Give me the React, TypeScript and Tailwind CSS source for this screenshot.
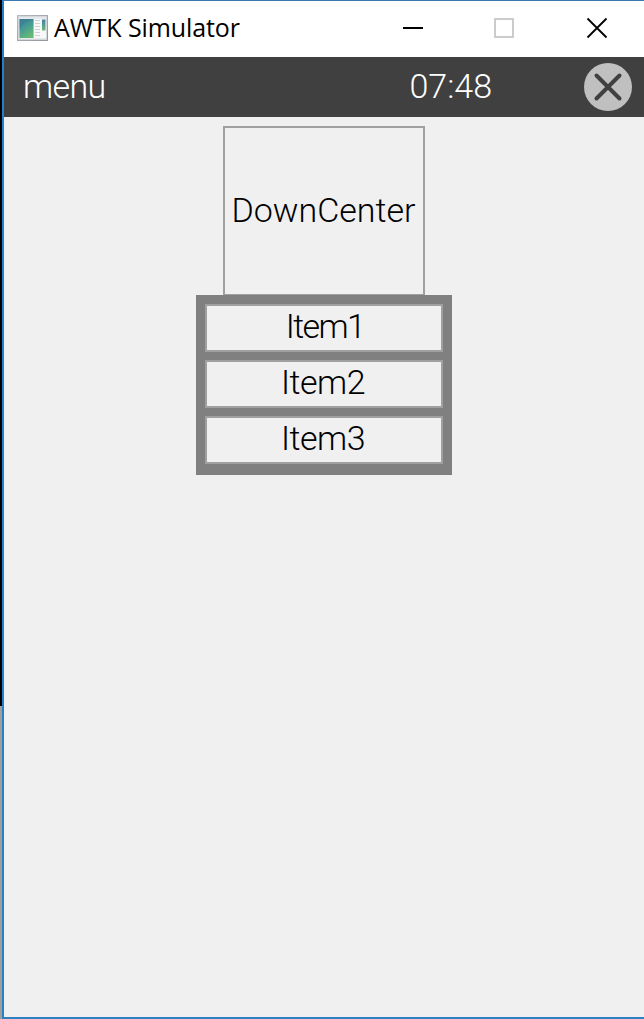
function AppIcon() {
  return (
    <svg width="32" height="26" viewBox="0 0 32 26" className="mb-0.5 shrink-0">
      <defs>
        <linearGradient id="pane" x1="0" y1="0" x2="0.5" y2="1">
          <stop offset="0" stopColor="#3f7f9c" />
          <stop offset="0.5" stopColor="#459a94" />
          <stop offset="1" stopColor="#64b878" />
        </linearGradient>
        <linearGradient id="strip" x1="0" y1="0" x2="0" y2="1">
          <stop offset="0" stopColor="#4480a8" />
          <stop offset="1" stopColor="#6cb978" />
        </linearGradient>
        <linearGradient id="frame" x1="0" y1="0" x2="1" y2="1">
          <stop offset="0" stopColor="#b4bac0" />
          <stop offset="1" stopColor="#92979c" />
        </linearGradient>
      </defs>
      <rect x="0.5" y="0.5" width="30" height="25" fill="#e6e9ec" stroke="url(#frame)" />
      <rect x="1.5" y="1.5" width="28" height="23" fill="none" stroke="#d3d7da" />
      <rect x="17" y="4" width="12" height="19" fill="#f8f8f8" />
      <rect x="2.5" y="4" width="14" height="19" fill="url(#pane)" />
      <path d="M2.5 14Q7 6 16.5 5V4h-14z" fill="#38758f" opacity="0.4" />
      <path d="M18 5.5h5M18 8.5h5M18 11.5h5M18 14.5h5M18 17.5h5M18 20.5h5" stroke="#cfd2d5" />
      <rect x="25" y="4.5" width="3.5" height="11" fill="url(#strip)" />
    </svg>
  );
}

function TitleBar() {
  return (
    <header className="flex h-14 shrink-0 items-center bg-white pl-[13px] pr-9 text-black">
      <AppIcon />
      <h1 className="mb-1 ml-[5px] flex-1 whitespace-nowrap font-['Open_Sans',sans-serif] text-[25px] font-normal leading-[34px] tracking-[-0.1px]">
        AWTK Simulator
      </h1>
      <div className="mb-0.5 flex items-center">
        <button aria-label="Minimize" className="mr-[71px] h-0.5 w-5 bg-black" />
        <button aria-label="Maximize" className="mr-[72px] size-5 border-2 border-[#cccccc]" />
        <button aria-label="Close" className="size-[22px]">
          <svg width="22" height="22" viewBox="0 0 22 22" fill="none" stroke="#000" strokeWidth="1.8">
            <path d="M1.5 1.5 20.5 20.5M20.5 1.5 1.5 20.5" />
          </svg>
        </button>
      </div>
    </header>
  );
}

function MenuBar() {
  return (
    <nav className="flex h-[60px] shrink-0 items-center bg-[#404040] pl-[19px] pr-3 text-white">
      <span className="mb-0.5 flex-1 tracking-[-0.6px]">menu</span>
      <time className="mb-0.5 mr-[92px]">07:48</time>
      <button aria-label="Close window" className="size-12">
        <svg width="48" height="48" viewBox="0 0 48 48">
          <circle cx="24" cy="24" r="24" fill="#c0c0c0" />
          <path d="M12.5 12.5 35.5 35.5M35.5 12.5 12.5 35.5" stroke="#404040" strokeWidth="4" strokeLinecap="round" />
        </svg>
      </button>
    </nav>
  );
}

export default function App() {
  return (
    <div className="flex h-[1019px] w-[644px] overflow-hidden font-['Roboto',sans-serif] text-[34px] font-light leading-[40px]">
      <div className="flex w-0.5 shrink-0 flex-col bg-[#a09f9b]">
        <div className="h-[706px] bg-black" />
      </div>
      <div className="flex flex-1 flex-col border-b-2 border-l-2 border-t border-b-[#2f80c2] border-l-[#2680c8] border-t-[#3a78b0] bg-[#f0f0f0]">
        <TitleBar />
        <MenuBar />
        <main className="flex flex-col items-center pt-[9px] text-black">
          <button className="h-[170px] w-[202px] whitespace-nowrap border-2 border-[#a0a0a0] pb-0.5 pr-px font-light">DownCenter</button>
          <ul className="-mt-px flex h-[180px] w-64 flex-col gap-2 bg-[#808080] px-[9px] pt-[9px]">
            <li className="h-12 border-2 border-[#a0a0a0] bg-[#f0f0f0] pl-0.5 text-center tracking-[-1.6px]">Item1</li>
            <li className="h-12 border-2 border-[#a0a0a0] bg-[#f0f0f0] pr-0.5 text-center tracking-[-0.5px]">Item2</li>
            <li className="h-12 border-2 border-[#a0a0a0] bg-[#f0f0f0] pr-0.5 text-center tracking-[-0.5px]">Item3</li>
          </ul>
        </main>
      </div>
    </div>
  );
}
